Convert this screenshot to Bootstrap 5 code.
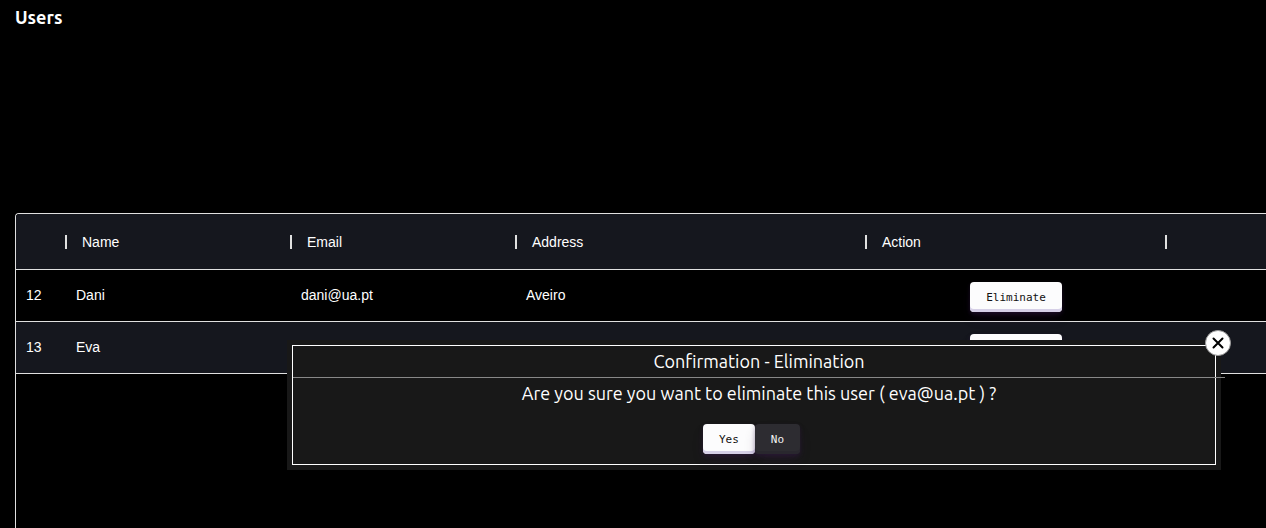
<!DOCTYPE html>
<html lang="en">
<head>
<meta charset="utf-8">
<meta name="viewport" content="width=device-width, initial-scale=1">
<title>Users</title>
<link href="https://cdn.jsdelivr.net/npm/bootstrap@5.3.0/dist/css/bootstrap.min.css" rel="stylesheet">
<style>
  body { background: #000; color: #fff; font-family: Ubuntu, "Noto Sans", sans-serif; }
  .page-title { font-size: 18px; line-height: 20px; padding: 7px 0 0 15px; height: 213px; }
  .grid-frame { margin-left: 15px; border: 1px solid #e0e0e0; border-width: 1px 0 0 1px; border-top-left-radius: 4px; }
  .user-table { table-layout: fixed; font: 14px/20px "Liberation Sans", Arial, sans-serif; }
  .user-table th, .user-table td { padding: 0 10px; border-bottom: 1px solid #e0e0e0; vertical-align: middle; }
  .user-table th { height: 55px; padding: 1px 10px 0 16px; font-weight: 400; position: relative; }
  .user-table td { height: 52px; }
  .user-table thead, .user-table tbody tr:nth-child(even) { background: #15171e; }
  .user-table th:not(:last-child)::after { content: ""; position: absolute; right: -1px; top: 21px; width: 2px; height: 14px; background: #e0e0e0; }
  .col-id { width: 50px; } .col-text { width: 225px; } .col-address { width: 350px; } .col-action { width: 300px; }
  .key { border: 0; border-radius: 4px; height: 30px; padding: 2px 16px 0; font: 11px/28px "DejaVu Sans Mono", monospace;
    background: #fcfcfd; color: #111; box-shadow: 0 2px 4px rgba(55,25,75,.4), 0 7px 13px -3px rgba(55,25,75,.3), inset 0 -3px 0 #d6d0e7; }
  .key-dark { background: #2d2c31; color: #f2f2f2; box-shadow: 0 2px 4px rgba(55,25,75,.4), 0 7px 13px -3px rgba(55,25,75,.3), inset 0 -3px 0 #29272e; }
  .user-table .key { margin-top: 4px; vertical-align: middle; }
  .confirm { top: 340px; left: 287px; right: 45px; padding: 5px; background: #181818; font-size: 18px; line-height: 20px; }
  .confirm-body { border: 1px solid #fff; }
  .confirm-row { width: calc(100% + 10px); padding: 5px 5px 7px; }
  .confirm-title { font-size: 18px; line-height: 20px; padding: 5px 5px 6px; border-bottom: 1px solid #888; }
  .confirm-actions { padding: 14px 5px 10px 0; }
  .close-round { top: -10px; right: -10px; width: 26px; height: 26px; background: #fff; border: 1px solid #999; color: #000; }
</style>
<script src="https://cdn.jsdelivr.net/npm/bootstrap@5.3.0/dist/js/bootstrap.bundle.min.js"></script>
</head>
<body>
<main class="position-relative d-flex flex-column vh-100 overflow-hidden">
  <h1 class="page-title fw-bold m-0 flex-shrink-0">Users</h1>
  <div class="grid-frame flex-grow-1 overflow-hidden">
    <table class="user-table w-100">
      <colgroup><col class="col-id"><col class="col-text"><col class="col-text"><col class="col-address"><col class="col-action"><col></colgroup>
      <thead><tr><th></th><th scope="col">Name</th><th scope="col">Email</th><th scope="col">Address</th><th scope="col">Action</th><th></th></tr></thead>
      <tbody>
        <tr><td>12</td><td>Dani</td><td>dani@ua.pt</td><td>Aveiro</td><td class="text-center"><button type="button" class="key">Eliminate</button></td><td></td></tr>
        <tr><td>13</td><td>Eva</td><td>eva@ua.pt</td><td></td><td class="text-center"><button type="button" class="key">Eliminate</button></td><td></td></tr>
      </tbody>
    </table>
  </div>
  <div class="confirm position-absolute" role="dialog" aria-labelledby="confirm-title">
    <button type="button" class="close-round position-absolute rounded-circle d-flex align-items-center justify-content-center p-0" aria-label="Close">
      <svg width="12" height="12" viewBox="0 0 12 12" fill="none" stroke="currentColor" stroke-width="2" stroke-linecap="round" aria-hidden="true"><path d="M1.5 1.5l9 9M10.5 1.5l-9 9"/></svg>
    </button>
    <div class="confirm-body">
      <h2 class="confirm-row confirm-title text-center fw-normal m-0" id="confirm-title">Confirmation - Elimination</h2>
      <p class="confirm-row text-center m-0">Are you sure you want to eliminate this user ( eva@ua.pt ) ?</p>
      <div class="confirm-actions d-flex justify-content-center">
        <button type="button" class="key">Yes</button><button type="button" class="key key-dark">No</button>
      </div>
    </div>
  </div>
</main>
</body>
</html>
